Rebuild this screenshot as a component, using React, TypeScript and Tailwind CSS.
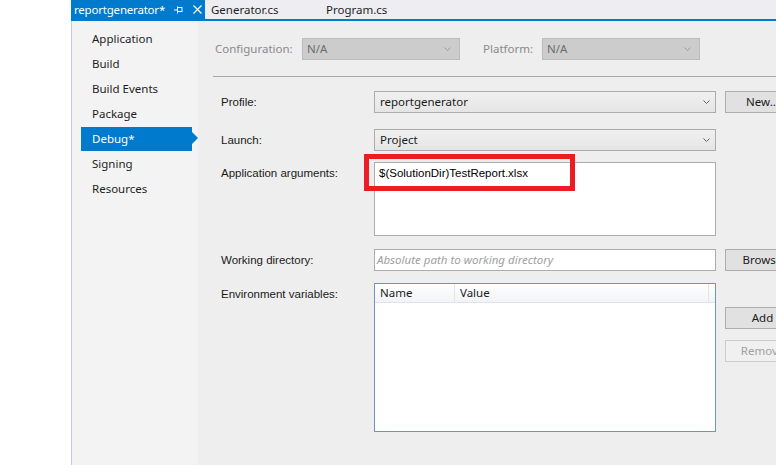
import React from 'react'

const ui = { fontFamily: '"Noto Sans", "Open Sans", sans-serif' }
const win = { fontFamily: '"Liberation Sans", Arial, sans-serif' }

function Chevron({ color = '#555555' }: { color?: string }) {
  return (
    <svg width="7" height="5" viewBox="0 0 7 5" className="shrink-0">
      <polyline points="0.5,0.5 3.5,3.5 6.5,0.5" fill="none" stroke={color} strokeWidth="1" />
    </svg>
  )
}

function Combo({ value, className = '' }: { value: string; className?: string }) {
  return (
    <div
      className={`h-[22px] w-[342px] flex items-center justify-between pl-[5px] pr-[5px] border border-[#acacac] bg-gradient-to-b from-[#f0f0f0] to-[#e5e5e5] text-[11.5px] text-[#1a1a1a] ${className}`}
      style={ui}
    >
      <span>{value}</span>
      <Chevron color="#606060" />
    </div>
  )
}

function Button({ label, disabled }: { label: string; disabled?: boolean }) {
  return (
    <div
      className={`h-[22px] w-[75px] shrink-0 flex items-center justify-center border text-[11.5px] ${
        disabled ? 'border-[#cccccc] bg-[#f0f0f0] text-[#a0a0a0]' : 'border-[#adadad] bg-[#e1e1e1] text-[#1a1a1a]'
      }`}
      style={ui}
    >
      {label}
    </div>
  )
}

function Label({ text }: { text: string }) {
  return (
    <div className="w-[153px] shrink-0 pt-[3px] text-[11.5px] text-[#1a1a1a]" style={win}>
      {text}
    </div>
  )
}

const sections = ['Application', 'Build', 'Build Events', 'Package', 'Debug*', 'Signing', 'Resources']

export default function App() {
  return (
    <div className="relative w-[776px] h-[465px] flex bg-white overflow-hidden">
      <div className="w-[71px] shrink-0 bg-white" />
      <div className="w-px shrink-0 bg-[#ccc8dc] mt-[21px]" />
      <div className="flex-1 flex flex-col min-w-0">
        {/* document tabs */}
        <div className="h-[19px] shrink-0 flex items-stretch bg-[#eeeef2] text-[11.5px]" style={ui}>
          <div className="w-[134px] shrink-0 -ml-px flex items-center pl-[3px] bg-[#007acc] text-white">
            <span className="whitespace-nowrap tracking-[-0.2px]">reportgenerator*</span>
            <svg width="9" height="8" viewBox="0 0 9 8" className="ml-[9px] shrink-0">
              <line x1="0" y1="4" x2="3" y2="4" stroke="#ffffff" strokeWidth="1" />
              <line x1="3.5" y1="0.5" x2="3.5" y2="7.5" stroke="#ffffff" strokeWidth="1" />
              <rect x="3.5" y="1.5" width="4.5" height="4" fill="none" stroke="#ffffff" strokeWidth="1" />
            </svg>
            <svg width="9" height="9" viewBox="0 0 9 9" className="ml-[10px] shrink-0">
              <path d="M0.5 0.5 L8.5 8.5 M8.5 0.5 L0.5 8.5" stroke="#ffffff" strokeWidth="1.2" />
            </svg>
          </div>
          <div className="flex items-center pl-[6px] w-[121px] shrink-0 text-[#1e1e1e]">Generator.cs</div>
          <div className="flex items-center text-[#1e1e1e]">Program.cs</div>
        </div>
        <div className="h-[2px] shrink-0 bg-[#007acc] -ml-px" />

        <div className="flex-1 flex min-h-0">
          {/* property pages list */}
          <div className="w-[126px] shrink-0 bg-[#f3f3f3] pt-[5px] flex flex-col">
            {sections.map((s) => {
              const active = s === 'Debug*'
              return (
                <div key={s} className="relative h-[25px] flex items-center">
                  {active ? (
                    <>
                      <div className="ml-[9px] w-[111px] h-[24px] bg-[#007acc] flex items-center pl-[11px] text-[11.5px] text-white" style={ui}>
                        {s}
                      </div>
                      <svg width="6" height="12" viewBox="0 0 6 12" className="absolute left-[120px] top-[6px]">
                        <polygon points="0,0 6,6 0,12" fill="#007acc" />
                      </svg>
                    </>
                  ) : (
                    <span className="pl-[20px] text-[11.5px] text-[#1e1e1e]" style={ui}>
                      {s}
                    </span>
                  )}
                </div>
              )
            })}
          </div>

          {/* debug page */}
          <div className="flex-1 bg-[#eeeeee] pl-[15px] pt-[17px] flex flex-col">
            <div className="flex items-center pl-[2px] text-[11.5px]" style={ui}>
              <span className="w-[87px] text-[#8a8a8a]">Configuration:</span>
              <div className="h-[22px] w-[158px] flex items-center justify-between pl-[4px] pr-[8px] border border-[#bcbcbc] bg-[#cccccc] text-[#6d6d6d]">
                <span>N/A</span>
                <Chevron color="#9a9a9a" />
              </div>
              <span className="ml-[23px] w-[59px] text-[#8a8a8a]">Platform:</span>
              <div className="h-[22px] w-[158px] flex items-center justify-between pl-[4px] pr-[8px] border border-[#bcbcbc] bg-[#cccccc] text-[#6d6d6d]">
                <span>N/A</span>
                <Chevron color="#9a9a9a" />
              </div>
            </div>

            <div className="mt-[16px] h-px bg-[#a9a9a9]" />

            <div className="pl-[8px] flex flex-col">
              <div className="mt-[14px] flex">
                <Label text="Profile:" />
                <Combo value="reportgenerator" />
                <div className="ml-[9px]">
                  <Button label="New..." />
                </div>
              </div>

              <div className="mt-[16px] flex">
                <Label text="Launch:" />
                <Combo value="Project" />
              </div>

              <div className="mt-[11px] flex">
                <Label text="Application arguments:" />
                <div className="h-[74px] w-[342px] border border-[#acacac] bg-white pl-[4px] pt-[2px] text-[11.5px] text-[#000000]" style={win}>
                  $(SolutionDir)TestReport.xlsx
                </div>
              </div>

              <div className="mt-[13px] flex">
                <Label text="Working directory:" />
                <div className="h-[22px] w-[342px] border border-[#acacac] bg-white flex items-center pl-[2px] text-[11.5px] italic text-[#a0a0a0]" style={ui}>
                  Absolute path to working directory
                </div>
                <div className="ml-[9px]">
                  <Button label="Browse" />
                </div>
              </div>

              <div className="mt-[12px] flex">
                <Label text="Environment variables:" />
                <div className="h-[149px] w-[342px] border border-[#7093c2] bg-white flex flex-col">
                  <div className="h-[19px] flex bg-gradient-to-b from-white to-[#f2f3f5] border-b border-[#dfe2e8] text-[11.5px] text-[#1a1a1a]" style={ui}>
                    <div className="w-[80px] border-r border-[#e3e5ea] flex items-center pl-[5px]">Name</div>
                    <div className="w-[254px] border-r border-[#e3e5ea] flex items-center pl-[5px]">Value</div>
                  </div>
                </div>
                <div className="ml-[9px] pt-[24px] flex flex-col gap-[11px]">
                  <Button label="Add" />
                  <Button label="Remove" disabled />
                </div>
              </div>
            </div>
          </div>
        </div>
      </div>

      {/* red highlight annotation */}
      <div className="absolute left-[364px] top-[154px] w-[211px] h-[37px] border-[5px] border-[#ed1c24]" />
    </div>
  )
}
